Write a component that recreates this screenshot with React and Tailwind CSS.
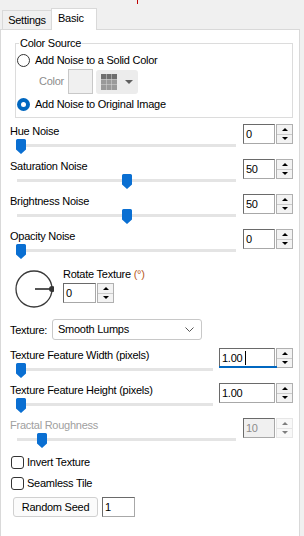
import React from 'react';

const Up = () => <div className="h-0 w-0 border-x-[3px] border-b-[3px] border-x-transparent border-b-black" />;
const Down = () => <div className="h-0 w-0 border-x-[3px] border-t-[3px] border-x-transparent border-t-black" />;

function SpinBox({ value, boxClass = 'w-[32px]', disabled = false, focused = false }) {
    return (
        <div className="flex h-[20px] gap-px">
            <div
                className={`relative h-[20px] ${boxClass} border border-[#a8a8a8] border-l-[#6a6a6a] border-t-[#6a6a6a] pl-[2px] leading-[18px] ${
                    disabled ? 'bg-[#f0f0f0] text-[#8c8c8c]' : 'bg-white text-black'
                }`}
            >
                {value}
                {focused && (
                    <>
                        <span className="absolute left-[25px] top-[2px] h-[14px] w-px bg-black" />
                        <span className="absolute -bottom-px -left-px h-[2px] w-[58px] bg-[#0067c0]" />
                    </>
                )}
            </div>
            <div className={`flex h-[20px] w-[17px] flex-col border ${disabled ? 'border-[#cfcfcf] opacity-50' : 'border-[#b0b0b0]'} bg-[#f3f3f3]`}>
                <div className="flex flex-1 items-center justify-center border-b border-[#cacaca]">
                    <Up />
                </div>
                <div className="flex flex-1 items-center justify-center">
                    <Down />
                </div>
            </div>
        </div>
    );
}

function SliderRow({ label, value, thumbClass, leftClass = 'w-[242px]', trackClass = 'w-[219px]', boxClass, disabled, focused }) {
    return (
        <div className="flex h-[35px]">
            <div className={`flex flex-col ${leftClass}`}>
                <div className={`mt-px h-[16px] pl-[9px] leading-[16px] ${disabled ? 'text-[#a0a0a0]' : ''}`}>{label}</div>
                <div className={`relative ml-[16px] h-[15px] ${trackClass}`}>
                    <div className="mt-[5px] h-[3px] bg-[#e4e4e4]" />
                    <svg className={`absolute top-0 ${thumbClass}`} width="10" height="15" viewBox="0 0 10 15">
                        <path d="M1.5 0H8.5A1.5 1.5 0 0 1 10 1.5V10.5L5 15L0 10.5V1.5A1.5 1.5 0 0 1 1.5 0Z" fill="#0a6fd2" />
                    </svg>
                </div>
            </div>
            <div className="mt-[2px]">
                <SpinBox value={value} boxClass={boxClass} disabled={disabled} focused={focused} />
            </div>
        </div>
    );
}

function Checkbox({ label }) {
    return (
        <div className="ml-[10px] flex h-[13px] items-center gap-[3px]">
            <div className="h-[13px] w-[13px] rounded-[3px] border border-[#333] bg-white" />
            <span className="leading-[13px]">{label}</span>
        </div>
    );
}

const GridIcon = () => (
    <svg width="16" height="16" viewBox="0 0 16 16">
        <rect x="0" y="0" width="16" height="16" fill="#d8d8d8" />
        {[0, 1, 2].map((r) =>
            [0, 1, 2].map((c) => (
                <rect key={`${r}-${c}`} x={c * 5.5} y={r * 5.5} width="5" height="5" fill={r === 0 ? '#6e6e6e' : '#9a9a9a'} />
            ))
        )}
    </svg>
);

export default function App() {
    return (
        <div className="relative h-[536px] w-[304px] overflow-hidden bg-[#f0f0f0] font-['Liberation_Sans',Arial,sans-serif] text-[11px] tracking-[-0.25px] text-black">
            {/* stray marker from the window above */}
            <div className="absolute left-[137px] top-0 h-[4px] w-px bg-[#c00000]" />

            {/* Tabs */}
            <div className="flex h-[29px] items-end pl-[2px]">
                <div className="flex h-[19px] w-[50px] items-center justify-center border-x border-t border-[#d9d9d9] bg-[#f0f0f0]">Settings</div>
                <div className="relative z-10 -mb-px -ml-px flex h-[22px] w-[46px] items-center border-x border-t border-[#d9d9d9] bg-white pb-[2px] pl-[6px]">
                    Basic
                </div>
            </div>

            {/* Panel */}
            <div className="h-[520px] w-[300px] border border-[#d9d9d9] bg-white">
                {/* Color Source group */}
                <div className="relative ml-[14px] mt-[13px] h-[75px] w-[278px] border border-[#dcdcdc]">
                    <span className="absolute left-[3px] top-[-8px] bg-white px-px leading-[14px]">Color Source</span>
                    <div className="mt-[9px] flex h-[14px] items-center gap-[5px] pl-px">
                        <div className="h-[13px] w-[13px] rounded-full border border-[#333] bg-white" />
                        <span>Add Noise to a Solid Color</span>
                    </div>
                    <div className="mt-[2px] flex h-[25px] items-center">
                        <span className="ml-[23px] w-[29px] text-[#8d8d8d]">Color</span>
                        <div className="h-[25px] w-[25px] border border-[#c8c8c8] bg-[#f0f0f0]" />
                        <div className="ml-[3px] flex h-[24px] w-[42px] items-center gap-[8px] rounded-[3px] bg-[#ececec] pl-[5px]">
                            <GridIcon />
                            <div className="h-0 w-0 border-x-[4px] border-t-[4px] border-x-transparent border-t-[#606060]" />
                        </div>
                    </div>
                    <div className="mt-[3px] flex h-[14px] items-center gap-[5px] pl-px">
                        <div className="flex h-[13px] w-[13px] items-center justify-center rounded-full bg-[#0067c0]">
                            <div className="h-[5px] w-[5px] rounded-full bg-white" />
                        </div>
                        <span>Add Noise to Original Image</span>
                    </div>
                </div>

                <div className="mt-[4px]">
                    <SliderRow label="Hue Noise" value="0" thumbClass="left-[-1px]" />
                    <SliderRow label="Saturation Noise" value="50" thumbClass="left-[105px]" />
                    <SliderRow label="Brightness Noise" value="50" thumbClass="left-[105px]" />
                    <SliderRow label="Opacity Noise" value="0" thumbClass="left-[-1px]" />
                </div>

                {/* Rotate texture */}
                <div className="flex h-[56px]">
                    <svg className="ml-[13px] mt-[7px]" width="40" height="40" viewBox="0 0 40 40">
                        <circle cx="20" cy="20" r="18" fill="none" stroke="#3a3a3a" strokeWidth="1.3" />
                        <line x1="21" y1="20" x2="38" y2="20" stroke="#555" strokeWidth="2" />
                        <circle cx="38" cy="20" r="3" fill="#333" />
                    </svg>
                    <div className="ml-[9px] flex flex-col">
                        <div className="mt-[4px] h-[16px] leading-[16px]">
                            Rotate Texture <span className="text-[#b85a1c]">(°)</span>
                        </div>
                        <div className="mt-px">
                            <SpinBox value="0" boxClass="w-[33px]" />
                        </div>
                    </div>
                </div>

                {/* Texture select */}
                <div className="flex h-[28px] items-start">
                    <div className="mt-[4px] w-[51px] pl-[9px] leading-[16px]">Texture:</div>
                    <div className="mt-px flex h-[21px] w-[150px] items-center justify-between rounded-[3px] border border-[#c8c8c8] bg-white pl-[5px] pr-[7px]">
                        <span>Smooth Lumps</span>
                        <svg width="9" height="5" viewBox="0 0 9 5">
                            <path d="M0.5 0.5L4.5 4.5L8.5 0.5" fill="none" stroke="#555" strokeWidth="1" />
                        </svg>
                    </div>
                </div>

                <SliderRow label="Texture Feature Width (pixels)" value="1.00" thumbClass="left-[-1px]" leftClass="w-[218px]" trackClass="w-[196px]" boxClass="w-[56px]" focused />
                <SliderRow label="Texture Feature Height (pixels)" value="1.00" thumbClass="left-[-1px]" leftClass="w-[218px]" trackClass="w-[196px]" boxClass="w-[56px]" />
                <SliderRow label="Fractal Roughness" value="10" thumbClass="left-[20px]" disabled />

                <div className="mt-[5px]">
                    <Checkbox label="Invert Texture" />
                </div>
                <div className="mt-[8px]">
                    <Checkbox label="Seamless Tile" />
                </div>
                <div className="mt-[7px] flex">
                    <button className="ml-[12px] h-[20px] w-[85px] rounded-[3px] border border-[#d0d0d0] bg-[#fbfbfb] leading-[18px]">Random Seed</button>
                    <div className="ml-[4px] h-[20px] w-[33px] border border-[#a8a8a8] border-l-[#6a6a6a] border-t-[#6a6a6a] pl-[2px] leading-[18px]">1</div>
                </div>
            </div>
        </div>
    );
}
